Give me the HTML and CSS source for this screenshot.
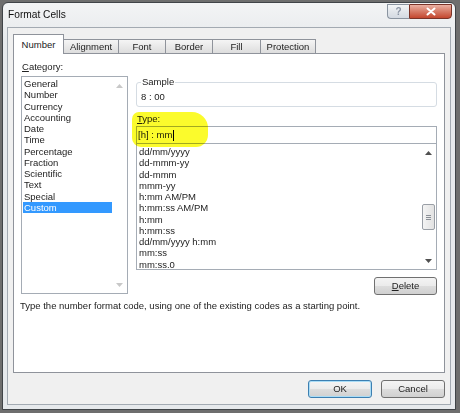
FILE: index.html
```
<!DOCTYPE html>
<html>
<head>
<meta charset="utf-8">
<link rel="stylesheet" href="styles.css">
</head>
<body>
<div class="window">
  <div class="titlebar">
    <span class="title">Format Cells</span>
    <div class="caption">
      <div class="cap-btn cap-help">?</div>
      <div class="cap-btn cap-close">
        <svg width="12" height="9" viewBox="0 0 12 9"><path d="M2.5 1.5 L9.5 7.5 M9.5 1.5 L2.5 7.5" stroke="#fff" stroke-width="2" stroke-linecap="round"/></svg>
      </div>
    </div>
  </div>
  <div class="client">
    <div class="tabs">
      <div class="tab tab-sel">Number</div>
      <div class="tab">Alignment</div>
      <div class="tab">Font</div>
      <div class="tab">Border</div>
      <div class="tab">Fill</div>
      <div class="tab">Protection</div>
    </div>
    <div class="panel">
      <div class="cols">
        <div class="col-left">
          <div class="label"><u>C</u>ategory:</div>
          <div class="listbox cat-list">
            <ul class="items">
              <li>General</li>
              <li>Number</li>
              <li>Currency</li>
              <li>Accounting</li>
              <li>Date</li>
              <li>Time</li>
              <li>Percentage</li>
              <li>Fraction</li>
              <li>Scientific</li>
              <li>Text</li>
              <li>Special</li>
              <li class="sel">Custom</li>
            </ul>
            <div class="vscroll disabled">
              <div class="arrow"><svg width="7" height="4" viewBox="0 0 7 4"><path d="M0 4 L3.5 0 L7 4Z" fill="#c8c8c8"/></svg></div>
              <div class="track"></div>
              <div class="arrow"><svg width="7" height="4" viewBox="0 0 7 4"><path d="M0 0 L3.5 4 L7 0Z" fill="#c8c8c8"/></svg></div>
            </div>
          </div>
        </div>
        <div class="col-right">
          <fieldset class="sample">
            <legend>Sample</legend>
            <div class="sample-val">8 : 00</div>
          </fieldset>
          <div class="label type-label"><u>T</u>ype:</div>
          <div class="input">[h] : mm<span class="caret"></span></div>
          <div class="listbox type-list">
            <ul class="items">
              <li>dd/mm/yyyy</li>
              <li>dd-mmm-yy</li>
              <li>dd-mmm</li>
              <li>mmm-yy</li>
              <li>h:mm AM/PM</li>
              <li>h:mm:ss AM/PM</li>
              <li>h:mm</li>
              <li>h:mm:ss</li>
              <li>dd/mm/yyyy h:mm</li>
              <li>mm:ss</li>
              <li>mm:ss.0</li>
            </ul>
            <div class="vscroll">
              <div class="arrow"><svg width="7" height="4" viewBox="0 0 7 4"><path d="M0 4 L3.5 0 L7 4Z" fill="#505050"/></svg></div>
              <div class="track"><div class="thumb"><span></span><span></span><span></span></div></div>
              <div class="arrow"><svg width="7" height="4" viewBox="0 0 7 4"><path d="M0 0 L3.5 4 L7 0Z" fill="#505050"/></svg></div>
            </div>
          </div>
          <div class="delete-row"><div class="button"><u>D</u>elete</div></div>
        </div>
      </div>
      <p class="desc">Type the number format code, using one of the existing codes as a starting point.</p>
    </div>
    <div class="footer">
      <div class="button default">OK</div>
      <div class="button">Cancel</div>
    </div>
  </div>
  <div class="highlight"></div>
</div>
</body>
</html>
```
FILE: styles.css
```
* { box-sizing: border-box; }
html { background: #6e6e6e; }
body {
  margin: 0;
  font-family: "Liberation Sans", Arial, sans-serif;
  font-size: 9.5px;
  color: #222;
}
.window {
  position: relative;
  margin: 2px 0 0 2px;
  width: 454px;
  height: 408px;
  border: 1px solid #404448;
  border-radius: 6px 6px 0 0;
  background: linear-gradient(#f3f4f5, #e6e9ec 40px, #e6e9ec);
  padding: 0 4px 4px;
  display: flex;
  flex-direction: column;
}
.titlebar {
  height: 24px;
  display: flex;
  justify-content: space-between;
  align-items: flex-start;
}
.title {
  font-size: 10.2px;
  line-height: 12px;
  margin: 6px 0 0 1px;
  color: #111;
}
.caption {
  display: flex;
  margin: 1px -1px 0 0;
}
.cap-btn {
  height: 15px;
  display: flex;
  align-items: center;
  justify-content: center;
  border: 1px solid #8a94a0;
}
.cap-help {
  width: 22px;
  border-right: none;
  border-radius: 0 0 0 4px;
  background: linear-gradient(#f4f6f8, #e2e6eb 50%, #d4dae2);
  color: #8a94a4;
  font-size: 10px;
  font-weight: bold;
}
.cap-close {
  width: 43px;
  border-color: #7a3328;
  border-radius: 0 0 4px 0;
  background: linear-gradient(#eab0a2, #d67a66 50%, #c4472f);
}
.client {
  flex: 1;
  background: #f0f0f0;
  border: 1px solid #a3aab2;
  display: flex;
  flex-direction: column;
}
.tabs {
  height: 25px;
  padding: 6px 0 0 5px;
  display: flex;
  align-items: flex-end;
}
.tab {
  height: 14px;
  border: 1px solid #8f939b;
  border-bottom: none;
  margin-right: -1px;
  background: linear-gradient(#f5f5f5, #e9e9e9 50%, #dddddd);
  display: flex;
  align-items: center;
  justify-content: center;
  line-height: 12px;
}
.tab:nth-child(1) { width: 51px; }
.tab:nth-child(2) { width: 56px; }
.tab:nth-child(3) { width: 48px; }
.tab:nth-child(4) { width: 48px; }
.tab:nth-child(5) { width: 49px; }
.tab:nth-child(6) { width: 56px; }
.tab-sel {
  position: relative;
  z-index: 1;
  height: 20px;
  margin-bottom: -1px;
  background: #fff;
  align-items: flex-start;
  padding-top: 4px;
}
.panel {
  margin: 0 5px;
  height: 320px;
  border: 1px solid #8f939b;
  background: #fff;
}
.cols {
  display: flex;
}
.col-left {
  margin-left: 7px;
  width: 107px;
}
.label {
  line-height: 12px;
  padding-left: 1px;
}
.col-left .label {
  margin: 7px 0 3px;
}
.listbox {
  border: 1px solid #a5acb5;
  display: flex;
  background: #fff;
}
.cat-list {
  height: 218px;
}
.items {
  list-style: none;
  margin: 0;
  padding: 1px 0 0 1px;
  flex: 1;
  line-height: 11.25px;
}
.items li {
  padding-left: 1px;
  white-space: nowrap;
}
.items li.sel {
  background: #3399ff;
  color: #fff;
}
.vscroll {
  width: 15px;
  display: flex;
  flex-direction: column;
}
.arrow {
  height: 17px;
  display: flex;
  align-items: center;
  justify-content: center;
}
.track {
  flex: 1;
}
.col-right {
  margin-left: 8px;
  width: 301px;
}
.sample {
  margin: 22px 0 0;
  padding: 3px 4px 3px;
  border: 1px solid #d5dce3;
  border-radius: 3px;
  min-width: 0;
}
.sample legend {
  padding: 0 1px;
  line-height: 12px;
}
.sample-val {
  line-height: 12px;
}
.type-label {
  margin-top: 6px;
}
.input {
  margin-top: 1px;
  height: 18px;
  border: 1px solid #a5acb5;
  padding-left: 1px;
  line-height: 16px;
  display: flex;
  align-items: center;
  background: #fff;
}
.caret {
  display: inline-block;
  width: 1px;
  height: 11px;
  background: #000;
  margin-left: 1px;
}
.type-list {
  margin-top: -1px;
  height: 127px;
}
.type-list .items {
  padding-top: 2px;
}
.thumb {
  margin: 43px 0 0 1px;
  width: 13px;
  height: 26px;
  border: 1px solid #9a9fa6;
  border-radius: 2px;
  background: linear-gradient(90deg, #f4f4f4, #e2e2e2);
  display: flex;
  flex-direction: column;
  align-items: center;
  justify-content: center;
  gap: 1px;
}
.thumb span {
  width: 5px;
  height: 1px;
  background: #8a8f96;
}
.delete-row {
  display: flex;
  justify-content: flex-end;
  margin-top: 7px;
}
.button {
  width: 63px;
  height: 18px;
  border: 1px solid #707070;
  border-radius: 3px;
  background: linear-gradient(#f4f4f4, #ebebeb 50%, #dddddd 51%, #d0d0d0);
  display: flex;
  align-items: center;
  justify-content: center;
  line-height: 12px;
}
.button.default {
  border-color: #3c7fb1;
  box-shadow: inset 0 0 0 1px #a9dcf6;
}
.desc {
  margin: 5px 0 0 6px;
  line-height: 12px;
}
.footer {
  display: flex;
  justify-content: flex-end;
  gap: 9px;
  padding: 7px 5px 0 0;
}
.footer .button {
  width: 64px;
}
.highlight {
  position: absolute;
  left: 129px;
  top: 109px;
  width: 76px;
  height: 35px;
  border-radius: 7px 16px 12px 9px;
  background: #fbfb2c;
  mix-blend-mode: multiply;
  filter: blur(0.6px);
}
```
